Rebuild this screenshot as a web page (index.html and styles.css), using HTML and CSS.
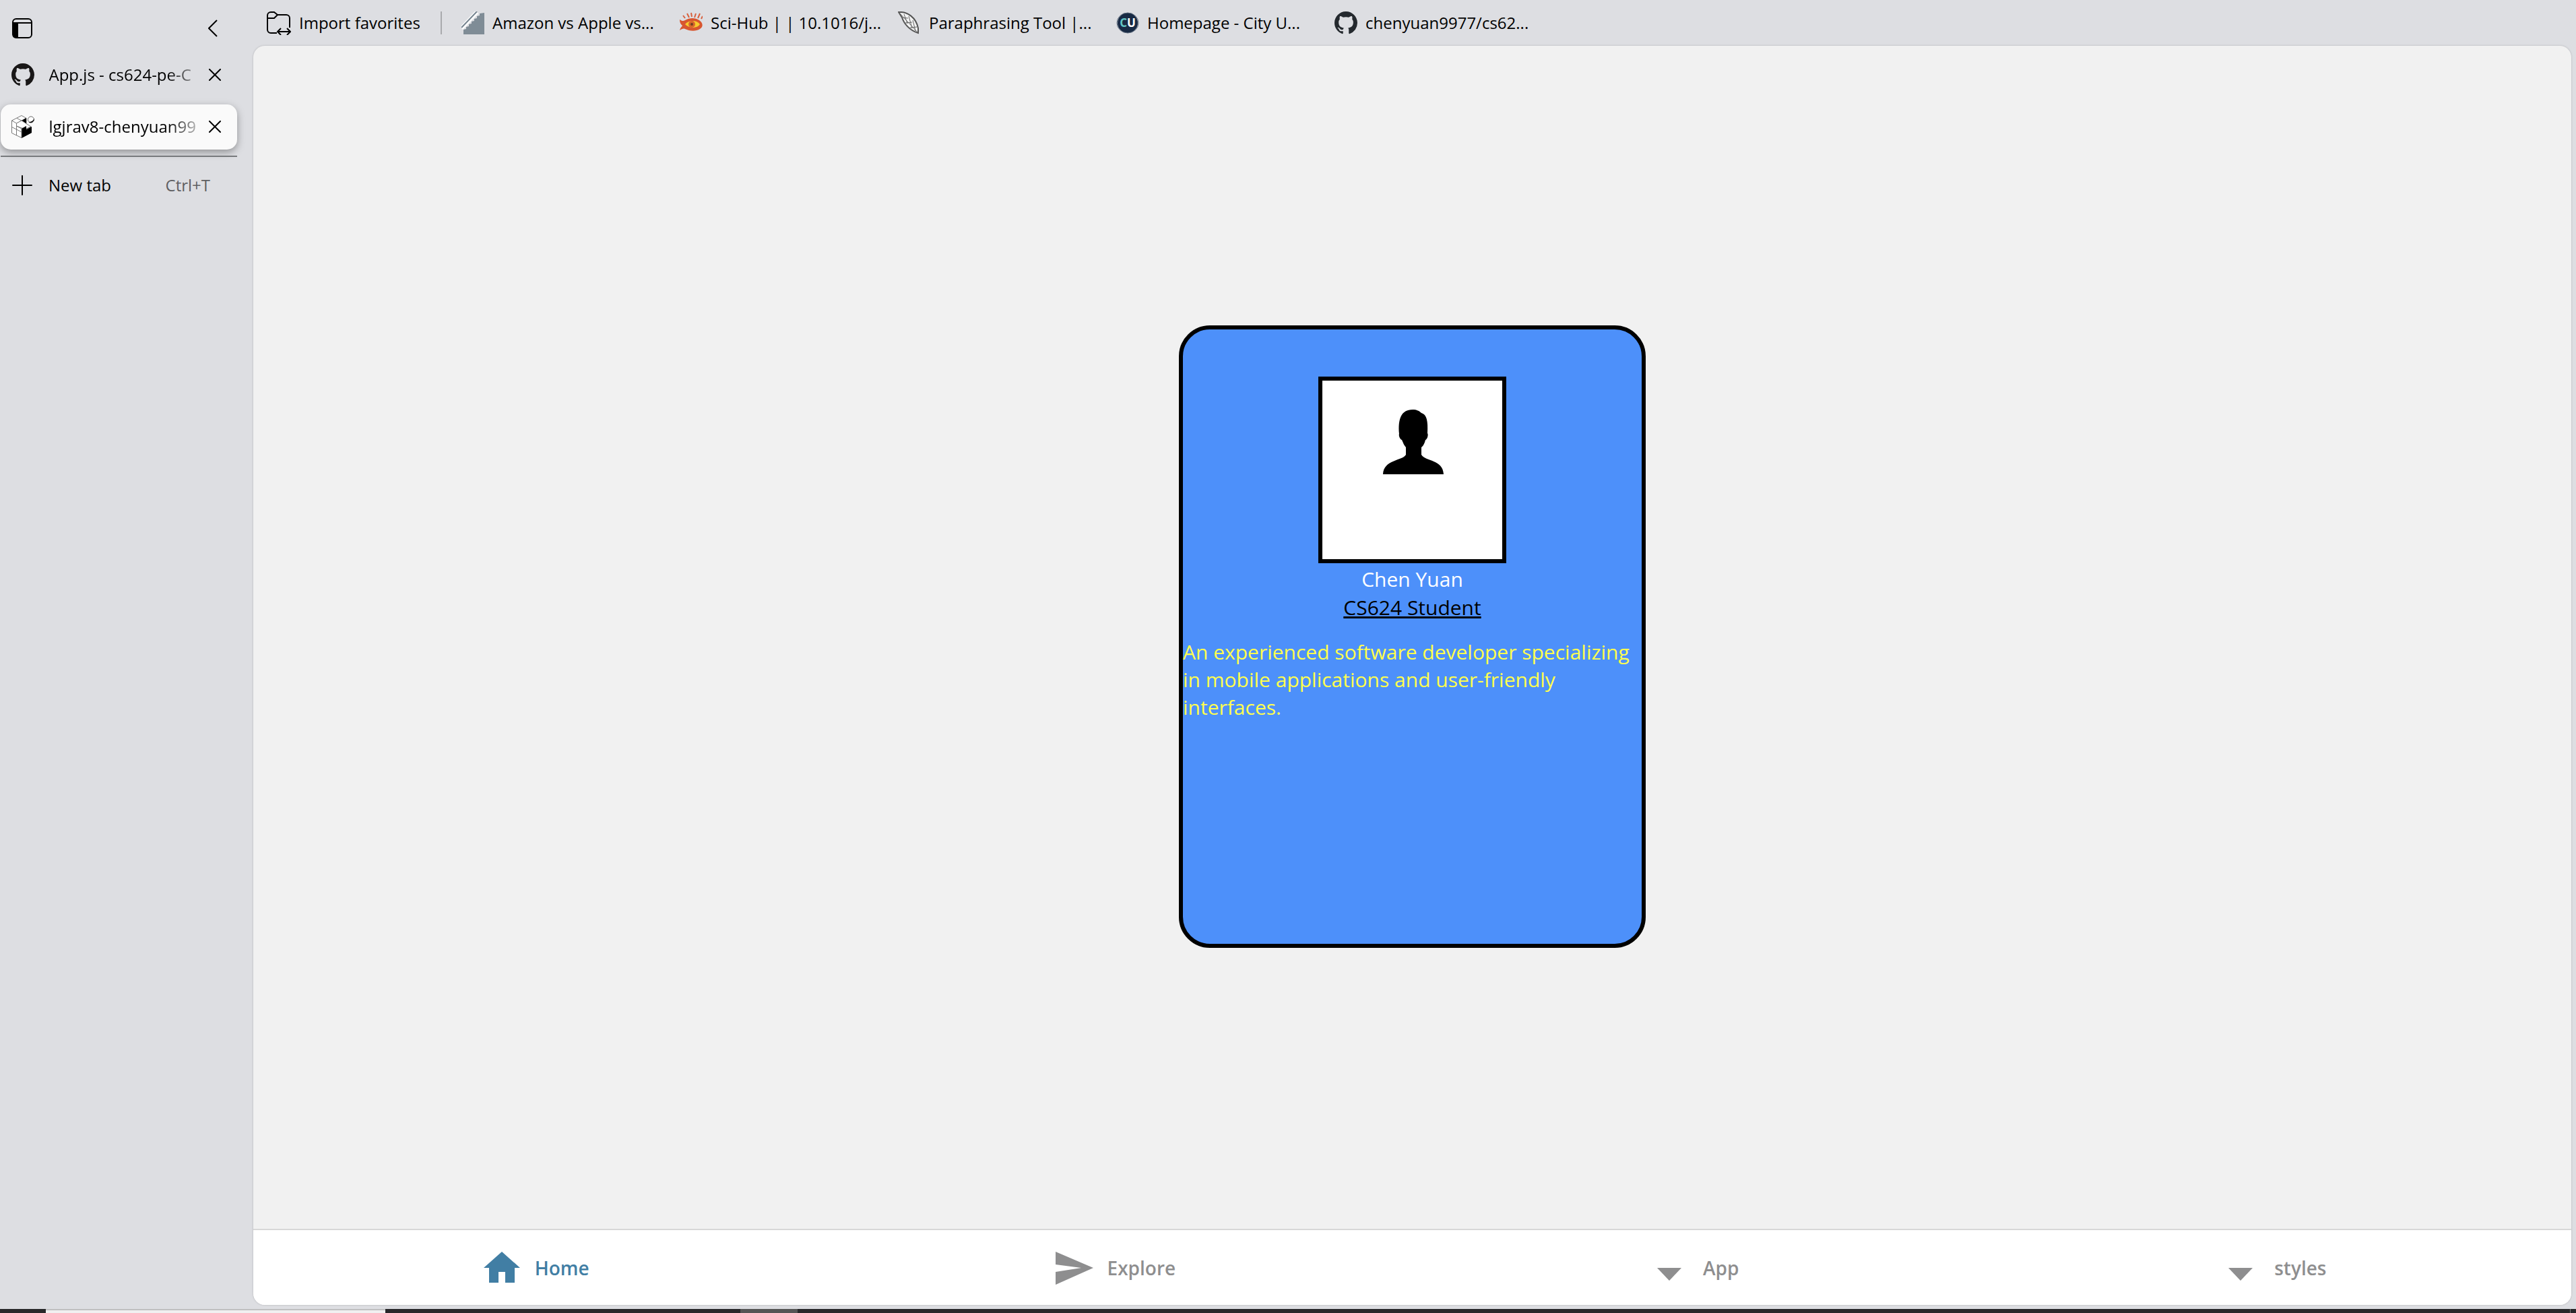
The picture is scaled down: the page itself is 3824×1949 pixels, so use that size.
FILE: index.html
```html
<!DOCTYPE html>
<html lang="en">
<head>
<meta charset="utf-8">
<title>lgjrav8-chenyuan9977</title>
<link rel="stylesheet" href="styles.css">
</head>
<body>
<svg class="defs" aria-hidden="true">
  <symbol id="github" viewBox="0 0 16 16"><path d="M8 0C3.58 0 0 3.58 0 8c0 3.54 2.29 6.53 5.47 7.59.4.07.55-.17.55-.38 0-.19-.01-.82-.01-1.49-2.01.37-2.53-.49-2.69-.94-.09-.23-.48-.94-.82-1.13-.28-.15-.68-.52-.01-.53.63-.01 1.08.58 1.23.82.72 1.21 1.87.87 2.33.66.07-.52.28-.87.51-1.07-1.78-.2-3.64-.89-3.64-3.95 0-.87.31-1.59.82-2.15-.08-.2-.36-1.02.08-2.12 0 0 .67-.21 2.2.82.64-.18 1.32-.27 2-.27.68 0 1.36.09 2 .27 1.53-1.04 2.2-.82 2.2-.82.44 1.1.16 1.92.08 2.12.51.56.82 1.27.82 2.15 0 3.07-1.87 3.75-3.65 3.95.29.25.54.73.54 1.48 0 1.07-.01 1.93-.01 2.2 0 .21.15.46.55.38A8.013 8.013 0 0016 8c0-4.42-3.58-8-8-8z"/></symbol>
  <symbol id="close" viewBox="0 0 18 18"><path d="M1 1l16 16M17 1L1 17" fill="none" stroke="#000" stroke-width="2" stroke-linecap="round"/></symbol>
  <symbol id="caret" viewBox="0 0 58 58"><path d="M10 29h36L28 48z" fill="currentColor"/></symbol>
</svg>
<div class="window">
  <aside class="sidebar">
    <div class="sidebar-head">
      <button class="icon-button" aria-label="Tab actions"><svg class="icon-30" viewBox="0 0 30 30"><rect x="1" y="1" width="28" height="28" rx="5" fill="none" stroke="#000" stroke-width="2"/><path d="M1 7h28" stroke="#000" stroke-width="2"/><path d="M1 7h8v22H5a4 4 0 0 1-4-4z"/></svg></button>
      <button class="icon-button" aria-label="Collapse pane"><svg class="chevron" viewBox="0 0 14 26"><path d="M13 1L1 13l12 12" fill="none" stroke="#000" stroke-width="2"/></svg></button>
    </div>
    <div class="tab">
      <svg class="icon-34 ink"><use href="#github"/></svg>
      <a class="tab-title" href="#app">App.js - cs624-pe-C</a>
      <button class="icon-button" aria-label="Close App.js tab"><svg class="icon-18"><use href="#close"/></svg></button>
    </div>
    <div class="tab tab-active">
      <svg class="icon-34" viewBox="0 0 34 34">
        <path d="M15 .5l7 4V18l7.500 0v8L15 33.500.5 26.500V8z" fill="#fff" stroke="#777"/>
        <path d="M.5 17.500L15 25M8 4.500l7 3.500M.5 8l7 4M7.500 12v18M7.500 12L22 4.500" fill="none" stroke="#777"/>
        <path d="M15 8l7-4v9z"/>
        <path d="M7.500 12l7.500-4 7 4.500 7 4.500-7 3-7-1-7.500-3z" fill="#fff" stroke="#777"/>
        <path d="M15 20l7-4v5l8-4v9l-15 8z"/>
        <path d="M7.500 16L15 20v14" fill="none" stroke="#777"/>
        <circle cx="29" cy="6.500" r="4.500" fill="#fff" stroke="#666"/><path d="M33.500 5a5 5 0 0 1-8 5c4 0 7-2 8-5z"/>
      </svg>
      <a class="tab-title" href="#snack">lgjrav8-chenyuan99</a>
      <button class="icon-button" aria-label="Close current tab"><svg class="icon-18"><use href="#close"/></svg></button>
    </div>
    <button class="new-tab">
      <svg class="icon-30" viewBox="0 0 30 30"><path d="M15 1v28M1 15h28" stroke="#000" stroke-width="2" stroke-linecap="round"/></svg>
      <span>New tab</span><span class="shortcut">Ctrl+T</span>
    </button>
  </aside>
  <div class="content">
    <nav class="bookmarks" aria-label="Favorites">
      <button class="import"><svg class="icon-36" viewBox="0 0 36 36"><path d="M15 33H6a5 5 0 0 1-5-5V7a5 5 0 0 1 5-5h5l5 4h13a5 5 0 0 1 5 5v14M1 11h10l5-5" fill="none" stroke="#000" stroke-width="2"/><path d="M17 31h17M21 26l-5 5 5 5M30 26l5 5-5 5" fill="none" stroke="#000" stroke-width="2"/></svg>Import favorites</button>
      <a class="bookmark" href="#amazon"><svg class="icon-34" viewBox="0 0 34 34"><path d="M3 34V27l4-1v-3l4-1v-3l4-1v-3l4-1v-3l4-1V7l4-1V3l7-1v32z" fill="#7f8c96"/><path d="M0 25L23 1" stroke="#fff" stroke-width="6"/><path d="M0 24L23 0" stroke="#75838f" stroke-width="2"/></svg><span>Amazon vs Apple vs...</span></a>
      <a class="bookmark" href="#scihub"><svg class="icon-34" viewBox="0 0 34 34"><path d="M0 12c3 2 5 3 8 1 7-4 15-4 21 0 6 4 6 10 1 13-6 4-16 3-22 0-3-1-5 0-8 2 1-4 3-5 4-7-3-2-4-5-4-9z" fill="#d8562f"/><path d="M8 19c5-6 17-7 22 0-4 7-17 6-22 0z" fill="#f7c92e"/><circle cx="18" cy="19" r="5" fill="#d8662b"/><circle cx="18" cy="19" r="2" fill="#713d24"/><path d="M5 6l3 4M11 3l3 6M17 2l1 6M24 3l-2 6M30 3l-3 7M34 7l-2 4" stroke="#d8603d" stroke-width="2"/></svg><span>Sci-Hub | | 10.1016/j...</span></a>
      <a class="bookmark" href="#paraphrase"><svg class="icon-34" viewBox="0 0 34 34"><path d="M1 1c13-1 26 8 29 24v7C17 28 9 18 6 9z" fill="#f2f2f2" stroke="#555" stroke-width="2"/><path d="M1 1l29 31M9 4l5 14M16 7l5 18M22 13l4 16M6 9l9 1M11 17l10-1M18 24l10-1" stroke="#666" fill="none"/></svg><span>Paraphrasing Tool |...</span></a>
      <a class="bookmark" href="#cityu"><svg class="icon-34" viewBox="0 0 34 34"><circle cx="17" cy="17" r="15" fill="#182a44"/><ellipse cx="17" cy="17" rx="16" ry="15" fill="none" stroke="#5c6a7c"/><text x="17" y="23" text-anchor="middle" class="cu"><tspan fill="#62c5c4">C</tspan><tspan fill="#fff">U</tspan></text></svg><span>Homepage - City U...</span></a>
      <a class="bookmark" href="#repo"><svg class="icon-34 slate"><use href="#github"/></svg><span>chenyuan9977/cs62...</span></a>
    </nav>
    <div class="page">
      <main class="stage">
        <article class="card">
          <div class="photo"><svg class="person" viewBox="0 0 90 96" role="img" aria-label="Profile"><path d="M24 36C22 14 27 0 44 0c6 0 10 2 13 5 8 2 10 12 9 30 2 3-1 10-3 10-1 4-3 9-6 11v11c6 10 32 7 33 29H0c1-22 29-20 34-29V56c-3-3-4-7-6-11-3-1-5-7-4-9z"/></svg></div>
          <h1 class="name">Chen Yuan</h1>
          <p class="role">CS624 Student</p>
          <p class="bio">An experienced software developer specializing in mobile applications and user-friendly interfaces.</p>
        </article>
      </main>
      <nav class="tabbar" aria-label="Screens">
        <a class="tabbar-item current" href="#home"><svg class="icon-58" viewBox="0 0 58 58"><path d="M29 5l27 24h-8v22H34V35H24v16H10V29H2z" fill="currentColor"/></svg>Home</a>
        <a class="tabbar-item" href="#explore"><svg class="icon-58" viewBox="0 0 58 58"><path d="M1 5l56 24L1 54V35l38-6L1 24z" fill="currentColor"/></svg>Explore</a>
        <a class="tabbar-item" href="#app-screen"><svg class="icon-58"><use href="#caret"/></svg>App</a>
        <a class="tabbar-item" href="#styles"><svg class="icon-58"><use href="#caret"/></svg>styles</a>
      </nav>
    </div>
  </div>
</div>
<div class="taskbar"><span class="task-open"></span><span class="task-hover"></span><span class="task-edge"></span></div>
</body>
</html>
```
FILE: styles.css
```css
* { box-sizing: border-box; }
body {
  margin: 0;
  min-height: 100vh;
  display: flex;
  flex-direction: column;
  background: #dddee2;
  color: #000;
  font: 24px/32px "Open Sans", "Noto Sans", sans-serif;
}
a { color: inherit; text-decoration: none; }
button { padding: 0; border: 0; background: none; color: inherit; font: inherit; }
svg { display: block; flex: none; }
.defs { position: absolute; width: 0; height: 0; }
.icon-18 { width: 18px; height: 18px; }
.icon-30 { width: 30px; height: 30px; }
.icon-34 { width: 34px; height: 34px; }
.icon-36 { width: 36px; height: 36px; }
.icon-58 { width: 58px; height: 58px; }
.chevron { width: 14px; height: 26px; }
.ink { fill: #191717; }
.slate { fill: #24292e; }
.cu { font: 700 17px "Open Sans", sans-serif; }

.window { flex: 1; display: flex; padding-bottom: 6px; }
.sidebar {
  width: 376px;
  flex: none;
  display: flex;
  flex-direction: column;
  padding-right: 24px;
}
.sidebar-head {
  height: 77px;
  display: flex;
  align-items: center;
  justify-content: space-between;
  padding: 7px 29px 0 18px;
}
.tab {
  height: 67px;
  margin-left: 1px;
  display: flex;
  align-items: center;
  justify-content: space-between;
  padding: 0 24px 0 16px;
  border-radius: 15px;
}
.tab-active {
  margin-top: 11px;
  margin-bottom: 9px;
  padding-bottom: 2px;
  background: #fafafa;
  box-shadow: 0 4px 12px rgba(0, 0, 0, .35);
}
.tab-title {
  width: 224px;
  margin-left: 8px;
  white-space: nowrap;
  -webkit-mask-image: linear-gradient(to right, #000 78%, rgba(0, 0, 0, .2));
  mask-image: linear-gradient(to right, #000 78%, rgba(0, 0, 0, .2));
}
.new-tab {
  height: 86px;
  margin-left: 1px;
  border-top: 2px solid #77797c;
  display: flex;
  align-items: center;
  gap: 24px;
  padding: 0 40px 0 17px;
}
.shortcut { margin-left: auto; color: #5f6062; }

.content { flex: 1; min-width: 0; display: flex; flex-direction: column; padding-right: 7px; }
.bookmarks { height: 68px; display: flex; align-items: center; padding-left: 20px; }
.import {
  width: 260px;
  height: 34px;
  margin-right: 29px;
  border-right: 2px solid #a9aaad;
  display: flex;
  align-items: center;
  gap: 12px;
}
.bookmark { width: 324px; display: flex; align-items: center; gap: 12px; white-space: nowrap; }

.page {
  flex: 1;
  display: flex;
  flex-direction: column;
  overflow: hidden;
  background: #f1f1f1;
  border-radius: 17px;
  box-shadow: 0 0 3px rgba(0, 0, 0, .2);
}
.stage { flex: 1; display: flex; align-items: center; justify-content: center; padding-bottom: 3px; }
.card {
  width: 693px;
  min-height: 924px;
  padding-top: 70px;
  border: 6px solid #000;
  border-radius: 46px;
  background: #4d90fa;
  display: flex;
  flex-direction: column;
  align-items: center;
  font-size: 30px;
  line-height: 42px;
}
.photo {
  width: 279px;
  height: 277px;
  padding: 43px 0 0 2px;
  border: 6px solid #000;
  background: #fff;
}
.person { width: 90px; height: 96px; margin: 0 auto; }
.name { margin: 3px 0 0; font-size: 30px; font-weight: 400; color: #fff; }
.role { margin: 0 0 24px; text-decoration: underline; text-decoration-thickness: 3px; }
.bio { width: 100%; margin: 0; color: #ffff4d; line-height: 41px; }

.tabbar { height: 113px; display: flex; background: #fff; border-top: 2px solid #d8d8d8; }
.tabbar-item {
  flex: 1;
  display: flex;
  align-items: center;
  justify-content: center;
  gap: 20px;
  padding-right: 22px;
  color: #8e8e8f;
  font-size: 28px;
  font-weight: 600;
}
.current { color: #417ea4; }

.taskbar { height: 6px; display: flex; background: #28282a; }
.task-open { width: 504px; margin-left: 68px; background: #f0f0f0; border-top: 2px solid #c0c0c0; }
.task-hover { width: 85px; margin-left: 527px; background: #555; }
.task-edge { width: 1px; margin: 0 8px 0 auto; background: #777; }
```
